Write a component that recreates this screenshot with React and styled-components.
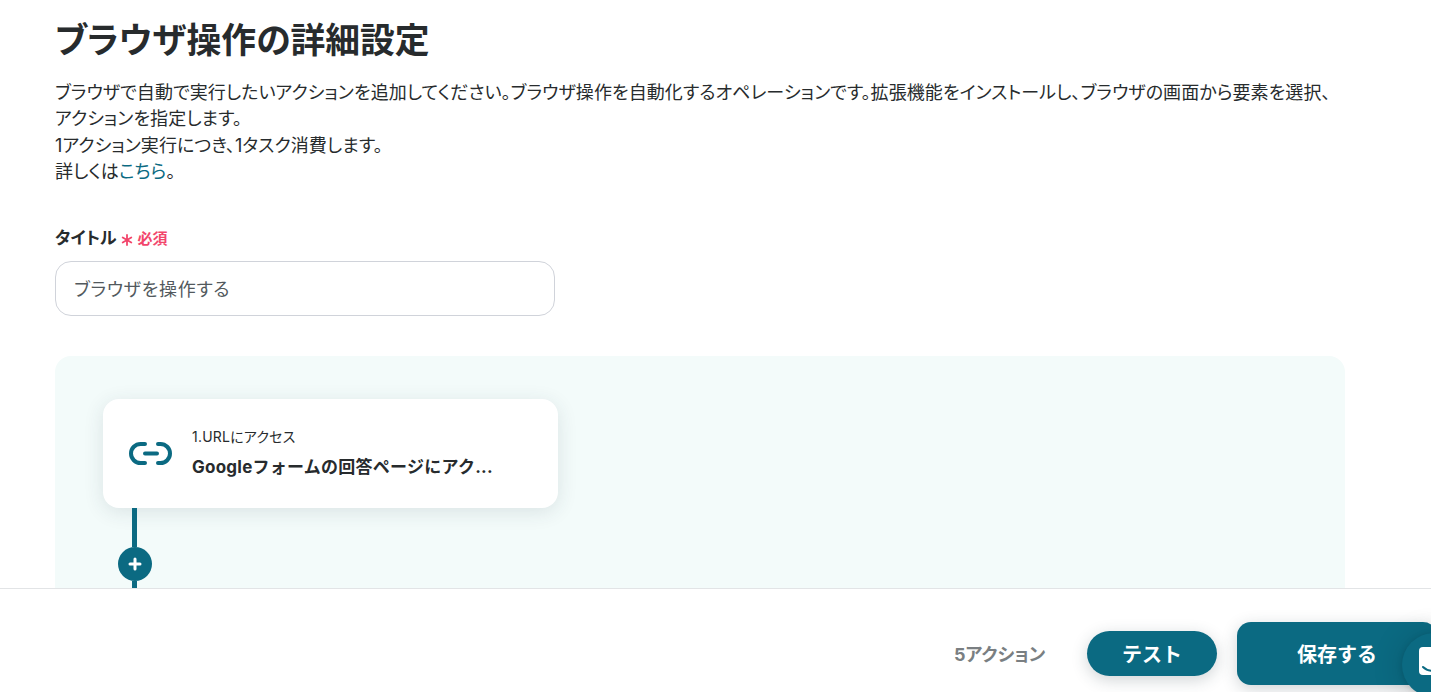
import React from 'react';
import styled, { createGlobalStyle } from 'styled-components';

const GlobalStyle = createGlobalStyle`
  html, body {
    margin: 0;
    padding: 0;
    height: 100%;
    overflow: hidden;
    background: #fff;
  }
  body {
    font-family: Inter, "Noto Sans CJK JP", sans-serif;
    color: #272b2d;
  }
`;

const Page = styled.div`
  position: relative;
  width: 1431px;
  height: 692px;
  overflow: hidden;
`;

const Content = styled.main`
  width: 1290px;
  margin-left: 55px;
  padding-top: 17px;
`;

const Heading = styled.h1`
  margin: 0;
  font-size: 34.8px;
  line-height: 46px;
  font-weight: 700;
  font-feature-settings: "palt";
`;

const Description = styled.p`
  margin: 17px 0 0;
  font-size: 18px;
  line-height: 26.4px;
  font-weight: 400;
  letter-spacing: 0.08px;
  font-feature-settings: "palt";
`;

const DocLink = styled.a`
  color: #0b6a82;
  text-decoration: none;
`;

const Field = styled.div`
  margin-top: 39px;
  width: 500px;
`;

const LabelRow = styled.div`
  display: flex;
  align-items: center;
  height: 24px;
`;

const LabelText = styled.label`
  font-size: 17px;
  font-weight: 700;
  font-feature-settings: "palt";
`;

const Asterisk = styled.svg`
  margin: 7px 0 0 4px;
`;

const Required = styled.span`
  margin: 2px 0 0 5px;
  color: #f2456b;
  font-size: 15px;
  font-weight: 700;
`;

const TextInput = styled.input`
  display: block;
  box-sizing: border-box;
  width: 500px;
  height: 55px;
  margin-top: 12px;
  padding: 0 18px;
  border: 1px solid #d0d3da;
  border-radius: 16px;
  font-family: inherit;
  font-size: 18px;
  letter-spacing: 0.7px;
  font-feature-settings: "palt";
  color: #52595d;
  background: #fff;
  outline: none;
`;

const Canvas = styled.section`
  margin-top: 40px;
  height: 400px;
  padding: 43px 48px 0;
  border-radius: 16px;
  background: #f3fbfa;
`;

const ActionCard = styled.div`
  box-sizing: border-box;
  display: flex;
  align-items: center;
  width: 455px;
  height: 109px;
  padding: 0 26px;
  gap: 20px;
  border-radius: 16px;
  background: #fff;
  box-shadow: 0 4px 20px rgba(40, 60, 70, 0.12);
`;

const ActionText = styled.div`
  display: flex;
  flex-direction: column;
  gap: 9px;
  min-width: 0;
`;

const ActionKind = styled.span`
  font-size: 14px;
  line-height: 18px;
  letter-spacing: 0.2px;
  font-feature-settings: "palt";
`;

const ActionName = styled.span`
  font-size: 17px;
  line-height: 24px;
  font-weight: 700;
  letter-spacing: 0.25px;
  white-space: nowrap;
`;

const Connector = styled.div`
  display: flex;
  flex-direction: column;
  align-items: center;
  width: 34px;
  margin-left: 15px;
`;

const Line = styled.div`
  width: 5px;
  height: ${(props) => props.$height}px;
  margin-right: 1px;
  background: #0b6a82;
`;

const AddButton = styled.button`
  flex: none;
  display: flex;
  align-items: center;
  justify-content: center;
  width: 34px;
  height: 34px;
  padding: 0;
  border: 0;
  border-radius: 50%;
  background: #0b6a82;
`;

const Footer = styled.footer`
  position: absolute;
  left: 0;
  right: 0;
  top: 588px;
  box-sizing: border-box;
  height: 130px;
  display: flex;
  align-items: center;
  padding-left: 954px;
  border-top: 1px solid #e2e4e6;
  background: #fff;
`;

const ActionCount = styled.span`
  flex: none;
  width: 90px;
  margin-top: -1px;
  font-size: 18px;
  font-weight: 700;
  color: #7a7f82;
  white-space: nowrap;
  font-feature-settings: "palt";
`;

const TestButton = styled.button`
  flex: none;
  width: 130px;
  height: 45px;
  margin-left: 43px;
  border: 0;
  border-radius: 23px;
  background: #0b6a82;
  color: #fff;
  font-family: inherit;
  font-size: 20px;
  font-weight: 700;
  box-shadow: 0 4px 16px rgba(40, 60, 70, 0.22);
`;

const SaveButton = styled.button`
  flex: none;
  width: 200px;
  height: 63px;
  margin-left: 20px;
  border: 0;
  border-radius: 14px;
  background: #0b6a82;
  color: #fff;
  font-family: inherit;
  font-size: 20px;
  font-weight: 700;
  box-shadow: 0 4px 16px rgba(40, 60, 70, 0.22);
`;

const ChatBubble = styled.div`
  position: absolute;
  left: 1402px;
  top: 633px;
  width: 64px;
  height: 64px;
  display: flex;
  padding: 14px 0 0 17px;
  box-sizing: border-box;
  border-radius: 50%;
  background: #0b6a82;
  box-shadow: 0 1px 6px rgba(0, 0, 0, 0.12), 0 2px 32px rgba(0, 0, 0, 0.16);
`;

function LinkIcon() {
  return (
    <svg width="43" height="23" viewBox="0 0 43 23" fill="none" stroke="#0b6a82" strokeWidth="4" strokeLinecap="round">
      <path d="M16 2 H11.5 A9.5 9.5 0 0 0 11.5 21 H16" />
      <path d="M29 2 H31.5 A9.5 9.5 0 0 1 31.5 21 H29" />
      <path d="M16 11.5 H28" />
    </svg>
  );
}

function ChatIcon() {
  return (
    <svg width="28" height="28" viewBox="0 0 28 28" fill="none">
      <rect width="28" height="28" rx="4" fill="#fff" />
      <path d="M4 20 C9 25 19 25 24 20" stroke="#0b6a82" strokeWidth="2" strokeLinecap="round" />
    </svg>
  );
}

export default function App() {
  return (
    <Page>
      <GlobalStyle />
      <Content>
        <Heading>ブラウザ操作の詳細設定</Heading>
        <Description>
          ブラウザで自動で実行したいアクションを追加してください。ブラウザ操作を自動化するオペレーションです。拡張機能をインストールし、ブラウザの画面から要素を選択、
          <br />
          アクションを指定します。
          <br />
          1アクション実行につき、1タスク消費します。
          <br />
          詳しくは<DocLink href="#">こちら</DocLink>。
        </Description>
        <Field>
          <LabelRow>
            <LabelText>タイトル</LabelText>
            <Asterisk width="12" height="12" viewBox="0 0 12 12" stroke="#f2456b" strokeWidth="1.8" strokeLinecap="round">
              <path d="M6 1 V11 M1.7 3.5 L10.3 8.5 M10.3 3.5 L1.7 8.5" />
            </Asterisk>
            <Required>必須</Required>
          </LabelRow>
          <TextInput defaultValue="ブラウザを操作する" />
        </Field>
        <Canvas>
          <ActionCard>
            <LinkIcon />
            <ActionText>
              <ActionKind>1.URLにアクセス</ActionKind>
              <ActionName>Googleフォームの回答ページにアク...</ActionName>
            </ActionText>
          </ActionCard>
          <Connector>
            <Line $height={39} />
            <AddButton aria-label="追加">
              <svg width="14" height="14" viewBox="0 0 14 14" stroke="#fff" strokeWidth="3" strokeLinecap="round">
                <path d="M7 2 V12 M2 7 H12" />
              </svg>
            </AddButton>
            <Line $height={40} />
          </Connector>
        </Canvas>
      </Content>
      <Footer>
        <ActionCount>5アクション</ActionCount>
        <TestButton>テスト</TestButton>
        <SaveButton>保存する</SaveButton>
      </Footer>
      <ChatBubble>
        <ChatIcon />
      </ChatBubble>
    </Page>
  );
}
